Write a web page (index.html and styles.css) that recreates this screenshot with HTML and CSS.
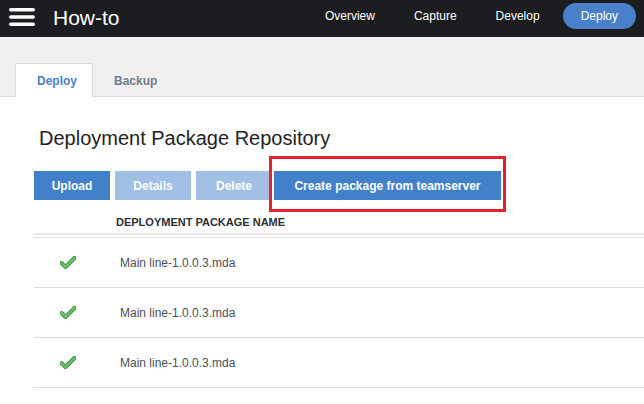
FILE: index.html
```html
<!DOCTYPE html>
<html>
<head>
<meta charset="utf-8">
<link rel="stylesheet" href="styles.css">
</head>
<body>
<header class="topbar">
  <div class="brand">
    <svg class="burger" width="26" height="18" viewBox="0 0 26 18">
      <rect x="0" y="0" width="26" height="3.6" rx="1.8" fill="#fff"/>
      <rect x="0" y="7.2" width="26" height="3.6" rx="1.8" fill="#fff"/>
      <rect x="0" y="14.4" width="26" height="3.6" rx="1.8" fill="#fff"/>
    </svg>
    <span class="title">How-to</span>
  </div>
  <nav class="nav">
    <a class="nav-item">Overview</a>
    <a class="nav-item">Capture</a>
    <a class="nav-item">Develop</a>
    <a class="nav-item active">Deploy</a>
  </nav>
</header>
<div class="tabband">
  <div class="tab active">Deploy</div>
  <div class="tab">Backup</div>
</div>
<main class="content">
  <h1 class="heading">Deployment Package Repository</h1>
  <div class="toolbar">
    <button class="btn">Upload</button>
    <button class="btn disabled">Details</button>
    <button class="btn disabled">Delete</button>
    <button class="btn wide marked">Create package from teamserver</button>
  </div>
  <div class="table">
    <div class="thead">Deployment Package Name</div>
    <div class="tbody">
      <div class="row">
        <span class="check"><svg width="16" height="13" viewBox="0 0 16 13"><path d="M1.5 7 L5.5 11 L14.5 2" fill="none" stroke="#3f8f3f" stroke-width="4" stroke-linecap="round" stroke-linejoin="round"/><path d="M1.5 7 L5.5 11 L14.5 2" fill="none" stroke="#6cc26c" stroke-width="2.4" stroke-linecap="round" stroke-linejoin="round"/></svg></span>
        <span class="name">Main line-1.0.0.3.mda</span>
      </div>
      <div class="row">
        <span class="check"><svg width="16" height="13" viewBox="0 0 16 13"><path d="M1.5 7 L5.5 11 L14.5 2" fill="none" stroke="#3f8f3f" stroke-width="4" stroke-linecap="round" stroke-linejoin="round"/><path d="M1.5 7 L5.5 11 L14.5 2" fill="none" stroke="#6cc26c" stroke-width="2.4" stroke-linecap="round" stroke-linejoin="round"/></svg></span>
        <span class="name">Main line-1.0.0.3.mda</span>
      </div>
      <div class="row">
        <span class="check"><svg width="16" height="13" viewBox="0 0 16 13"><path d="M1.5 7 L5.5 11 L14.5 2" fill="none" stroke="#3f8f3f" stroke-width="4" stroke-linecap="round" stroke-linejoin="round"/><path d="M1.5 7 L5.5 11 L14.5 2" fill="none" stroke="#6cc26c" stroke-width="2.4" stroke-linecap="round" stroke-linejoin="round"/></svg></span>
        <span class="name">Main line-1.0.0.3.mda</span>
      </div>
    </div>
  </div>
</main>
</body>
</html>
```
FILE: styles.css
```css
* { box-sizing: border-box; }
html, body { margin: 0; padding: 0; }
body {
  font-family: "Liberation Sans", Arial, sans-serif;
  background: #fff;
  width: 644px;
  overflow: hidden;
}
.topbar {
  height: 37px;
  background: #1c1d21;
  display: flex;
  align-items: center;
  justify-content: space-between;
  padding: 0 8px 0 9px;
}
.brand { display: flex; align-items: center; }
.burger { display: block; margin-top: -3px; }
.title {
  color: #fff;
  font-size: 21px;
  margin-left: 18px;
  margin-top: -2px;
}
.nav { display: flex; align-items: center; gap: 3px; margin-top: -5px; }
.nav-item {
  color: #fff;
  font-size: 12px;
  padding: 0 18px;
  height: 26px;
  line-height: 26px;
  border-radius: 13px;
}
.nav-item.active { background: #4a80c9; margin-left: 2px; }
.tabband {
  background: #f0f0f0;
  height: 60px;
  padding: 26px 0 0 15px;
  display: flex;
  align-items: flex-end;
  border-bottom: 1px solid #dcdcdc;
}
.tab {
  height: 34px;
  line-height: 34px;
  padding: 0 21px;
  font-size: 12px;
  font-weight: bold;
  color: #6f7c8c;
  margin-bottom: -1px;
  border: 1px solid transparent;
  border-bottom: none;
}
.tab.active {
  background: #fff;
  color: #4a7fc8;
  border-color: #dadada;
  width: 78px;
}
.tab.active + .tab { padding-left: 20px; }
.content { padding: 29px 0 0 34px; }
.heading {
  margin: 0 0 0 5px;
  font-size: 20px;
  font-weight: normal;
  line-height: 24px;
  color: #1f2226;
}
.toolbar {
  display: flex;
  gap: 5px;
  margin-top: 21px;
}
.btn {
  width: 76px;
  height: 29px;
  border: none;
  background: #4280ca;
  color: #fff;
  font-family: "Liberation Sans", Arial, sans-serif;
  font-size: 12px;
  font-weight: bold;
  padding: 0;
}
.btn.disabled { background: #a2c0e5; }
.btn.wide { width: 227px; margin-left: -3px; }
.marked { position: relative; }
.marked::after {
  content: "";
  position: absolute;
  left: -5px;
  right: -5px;
  top: -15px;
  bottom: -12px;
  border: 3px solid #e5212b;
}
.thead {
  margin-top: 15px;
  padding-left: 82px;
  height: 20px;
  line-height: 14px;
  font-size: 11px;
  font-weight: bold;
  text-transform: uppercase;
  color: #2c2f33;
  border-bottom: 2px solid #e8e8e8;
}
.tbody { border-top: 1px solid #e4e4e4; margin-top: 2px; }
.row {
  height: 50px;
  display: flex;
  align-items: center;
  border-bottom: 1px solid #dcdcdc;
}
.check { width: 86px; padding-left: 26px; display: flex; }
.check svg { display: block; }
.name { font-size: 12px; color: #4a4f58; }
```
